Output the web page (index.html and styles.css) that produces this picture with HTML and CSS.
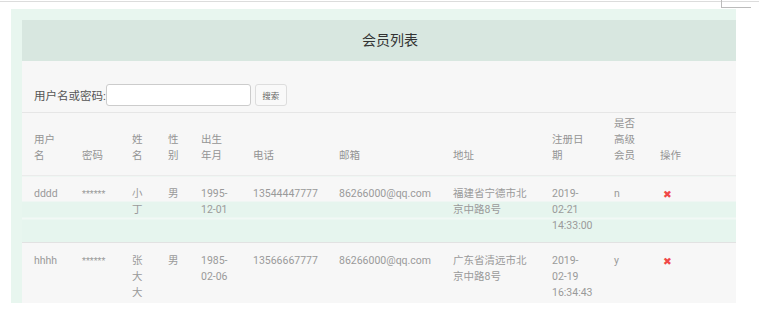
FILE: index.html
```html
<!DOCTYPE html>
<html lang="zh-CN">
<head>
    <meta charset="UTF-8">
    <meta name="viewport" content="width=device-width, initial-scale=1.0">
    <title>会员列表</title>
    <link rel="stylesheet" href="styles.css">
</head>
<body>
    <div class="topline"></div>
    <div class="corner"></div>

    <div class="wrap">
        <div class="panel">
            <div class="panel-title">会员列表</div>
            <div class="panel-body">
                <form class="search">
                    <label for="keyword">用户名或密码:</label>
                    <input type="text" id="keyword" name="keyword">
                    <button type="button">搜索</button>
                </form>

                <table class="members">
                    <colgroup>
                        <col style="width:52px">
                        <col style="width:50px">
                        <col style="width:36px">
                        <col style="width:33px">
                        <col style="width:52px">
                        <col style="width:86px">
                        <col style="width:114px">
                        <col style="width:99px">
                        <col style="width:62px">
                        <col style="width:46px">
                        <col style="width:84px">
                    </colgroup>
                    <thead>
                        <tr>
                            <th>用户名</th>
                            <th>密码</th>
                            <th>姓名</th>
                            <th>性别</th>
                            <th>出生年月</th>
                            <th>电话</th>
                            <th>邮箱</th>
                            <th>地址</th>
                            <th>注册日期</th>
                            <th>是否高级会员</th>
                            <th>操作</th>
                        </tr>
                    </thead>
                    <tbody>
                        <tr class="hl">
                            <td>dddd</td>
                            <td class="pwd">******</td>
                            <td>小丁</td>
                            <td>男</td>
                            <td>1995-12-01</td>
                            <td>13544447777</td>
                            <td>86266000@qq.com</td>
                            <td>福建省宁德市北京中路8号</td>
                            <td>2019-02-21 14:33:00</td>
                            <td>n</td>
                            <td><a class="del" href="#">✖</a></td>
                        </tr>
                        <tr>
                            <td>hhhh</td>
                            <td class="pwd">******</td>
                            <td>张大大</td>
                            <td>男</td>
                            <td>1985-02-06</td>
                            <td>13566667777</td>
                            <td>86266000@qq.com</td>
                            <td>广东省清远市北京中路8号</td>
                            <td>2019-02-19 16:34:43</td>
                            <td>y</td>
                            <td><a class="del" href="#">✖</a></td>
                        </tr>
                    </tbody>
                </table>
            </div>
        </div>
    </div>
</body>
</html>
```

FILE: styles.css
```css
body {
    margin: 0;
    background-color: #fff;
    font-family: Roboto, "Noto Sans CJK SC", sans-serif;
    color: #999;
}
.topline {
    margin-top: 1px;
    height: 1px;
    background-color: #dcdcdc;
}
.corner {
    position: absolute;
    left: 721px;
    top: 0;
    width: 29px;
    height: 7px;
    border-left: 1px solid #bbb;
    border-bottom: 1px solid #bbb;
}
.wrap {
    margin: 7px 23px 0 11px;
    padding: 11px 0 0 11px;
    height: 283px;
    background-color: #e8f6ef;
    overflow: hidden;
}
.panel {
    height: 100%;
    background-color: #f7f7f7;
}
.panel-title {
    height: 41px;
    line-height: 41px;
    padding-left: 22px;
    text-align: center;
    font-size: 14px;
    color: #333;
    background-color: #d8e7e0;
}
.search {
    display: flex;
    align-items: center;
    margin: 0;
    padding: 23px 12px 6px;
    border-bottom: 1px solid #e6e6e6;
}
.search label {
    font-size: 11.5px;
    color: #555;
}
.search input {
    box-sizing: border-box;
    width: 145px;
    height: 22px;
    padding: 2px 4px;
    border: 1px solid #ccc;
    border-radius: 3px;
    background-color: #fff;
}
.search button {
    box-sizing: border-box;
    width: 32px;
    height: 22px;
    margin-left: 4px;
    padding: 0;
    font-family: "Noto Sans CJK SC", sans-serif;
    font-size: 8.5px;
    color: #666;
    background-color: #f9f9f9;
    border: 1px solid #ddd;
    border-radius: 3px;
}
.members {
    width: 714px;
    table-layout: fixed;
    border-collapse: collapse;
    font-size: 10.5px;
    line-height: 16px;
}
.members th,
.members td {
    text-align: left;
    padding: 10px 14px 8px 8px;
}
.members th:first-child,
.members td:first-child {
    padding-left: 12px;
}
.members th {
    font-weight: normal;
    color: #949494;
    vertical-align: bottom;
    padding-top: 3px;
    padding-bottom: 11px;
    border-bottom: 1px solid #ebebeb;
}
.members td {
    vertical-align: top;
    color: #9a9a9a;
    border-bottom: 1px solid #e2e2e2;
}
.members tr.hl td {
    background: linear-gradient(#f7f7f7 0, #f7f7f7 25px, #e6f5ee 25px, #e6f5ee 41px, #f2f8f5 41px, #f2f8f5 43px, #e6f5ee 43px);
}
.members td.pwd {
    font-size: 9px;
}
.del {
    display: inline-block;
    margin-left: 3px;
    font-family: "DejaVu Sans", sans-serif;
    font-size: 10.5px;
    font-weight: bold;
    color: #f04848;
    text-decoration: none;
}
```
